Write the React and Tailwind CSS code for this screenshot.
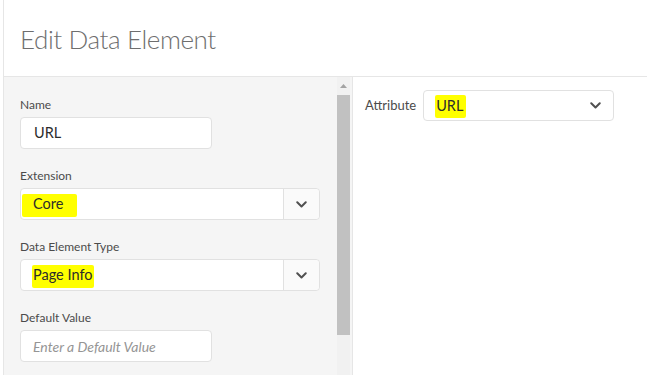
import React from 'react';

const font = { fontFamily: 'Lato, "Open Sans", Arial, sans-serif' };

function Chevron() {
  return (
    <svg width="11" height="7" viewBox="0 0 11 7" fill="none">
      <path d="M1.25 1.25 5.5 5.5l4.25-4.25" stroke="#505050" strokeWidth="2" strokeLinecap="round" strokeLinejoin="round" />
    </svg>
  );
}

function Marked({ children, className }) {
  return (
    <span className="relative inline-block">
      <span className={`absolute bg-[#ffff00] rounded-[2px] ${className}`} />
      <span className="relative">{children}</span>
    </span>
  );
}

function Label({ children }) {
  return <div className="text-[12px] leading-[14px] text-[#4b4b4b] mb-[5px]">{children}</div>;
}

function Select({ children }) {
  return (
    <div className="flex h-[32px] w-[300px] rounded-[4px] border border-[#e1e1e1] bg-white">
      <div className="flex-1 flex items-center pl-[12px] text-[14.5px] text-[#2c2c2c]">{children}</div>
      <div className="w-[36px] flex items-center justify-center border-l border-[#e1e1e1] bg-[#fafafa] rounded-r-[4px]">
        <Chevron />
      </div>
    </div>
  );
}

export default function App() {
  return (
    <div className="w-[647px] h-[375px] overflow-hidden bg-white flex" style={font}>
      <div className="w-[3px] bg-white" />
      <div className="flex-1 flex flex-col border-l border-[#e6e6e6]">
        <div className="h-[77px] shrink-0 flex items-center pl-[16px] border-b border-[#e6e6e6]">
          <h1 className="text-[26px] font-light tracking-[-0.4px] text-[#6e6e6e] pt-[2px]">Edit Data Element</h1>
        </div>
        <div className="flex-1 flex">
          <div className="w-[333px] bg-[#f5f5f5] pl-[16px] pt-[21px]">
            <Label>Name</Label>
            <div className="h-[32px] w-[192px] rounded-[4px] border border-[#e1e1e1] bg-white flex items-center pl-[13px] text-[14.5px] text-[#2c2c2c]">URL</div>

            <div className="mt-[20px]">
              <Label>Extension</Label>
              <Select>
                <Marked className="-left-[11px] -right-[14px] top-[1px] -bottom-[2px]">Core</Marked>
              </Select>
            </div>

            <div className="mt-[20px]">
              <Label>Data Element Type</Label>
              <Select>
                <Marked className="-left-[1px] -right-[2px] top-[1px] -bottom-[2px]">Page Info</Marked>
              </Select>
            </div>

            <div className="mt-[20px]">
              <Label>Default Value</Label>
              <div className="h-[32px] w-[192px] rounded-[4px] border border-[#e1e1e1] bg-white flex items-center pl-[12px] text-[14px] italic text-[#959595]">Enter a Default Value</div>
            </div>
          </div>

          <div className="w-[13px] bg-[#f1f1f1] flex flex-col items-center">
            <svg width="9" height="6" viewBox="0 0 9 6" className="mt-[6px]">
              <path d="M4.5 1 8 5H1z" fill="#a3a3a3" />
            </svg>
            <div className="mt-[6px] w-[13px] h-[240px] bg-[#c1c1c1]" />
          </div>
          <div className="w-[2px] bg-[#f5f5f5]" />
          <div className="flex-1 border-l border-[#e6e6e6] bg-white pl-[12px] pt-[13px]">
            <div className="flex items-center">
              <span className="text-[13px] text-[#4b4b4b] mr-[7px]">Attribute</span>
              <div className="flex items-center justify-between h-[31px] w-[191px] rounded-[4px] border border-[#e1e1e1] bg-white pl-[12px] pr-[12px] text-[14.5px] text-[#2c2c2c]">
                <Marked className="-left-[1px] -right-[3px] top-[0px] -bottom-[2px]">URL</Marked>
                <Chevron />
              </div>
            </div>
          </div>
        </div>
      </div>
    </div>
  );
}
